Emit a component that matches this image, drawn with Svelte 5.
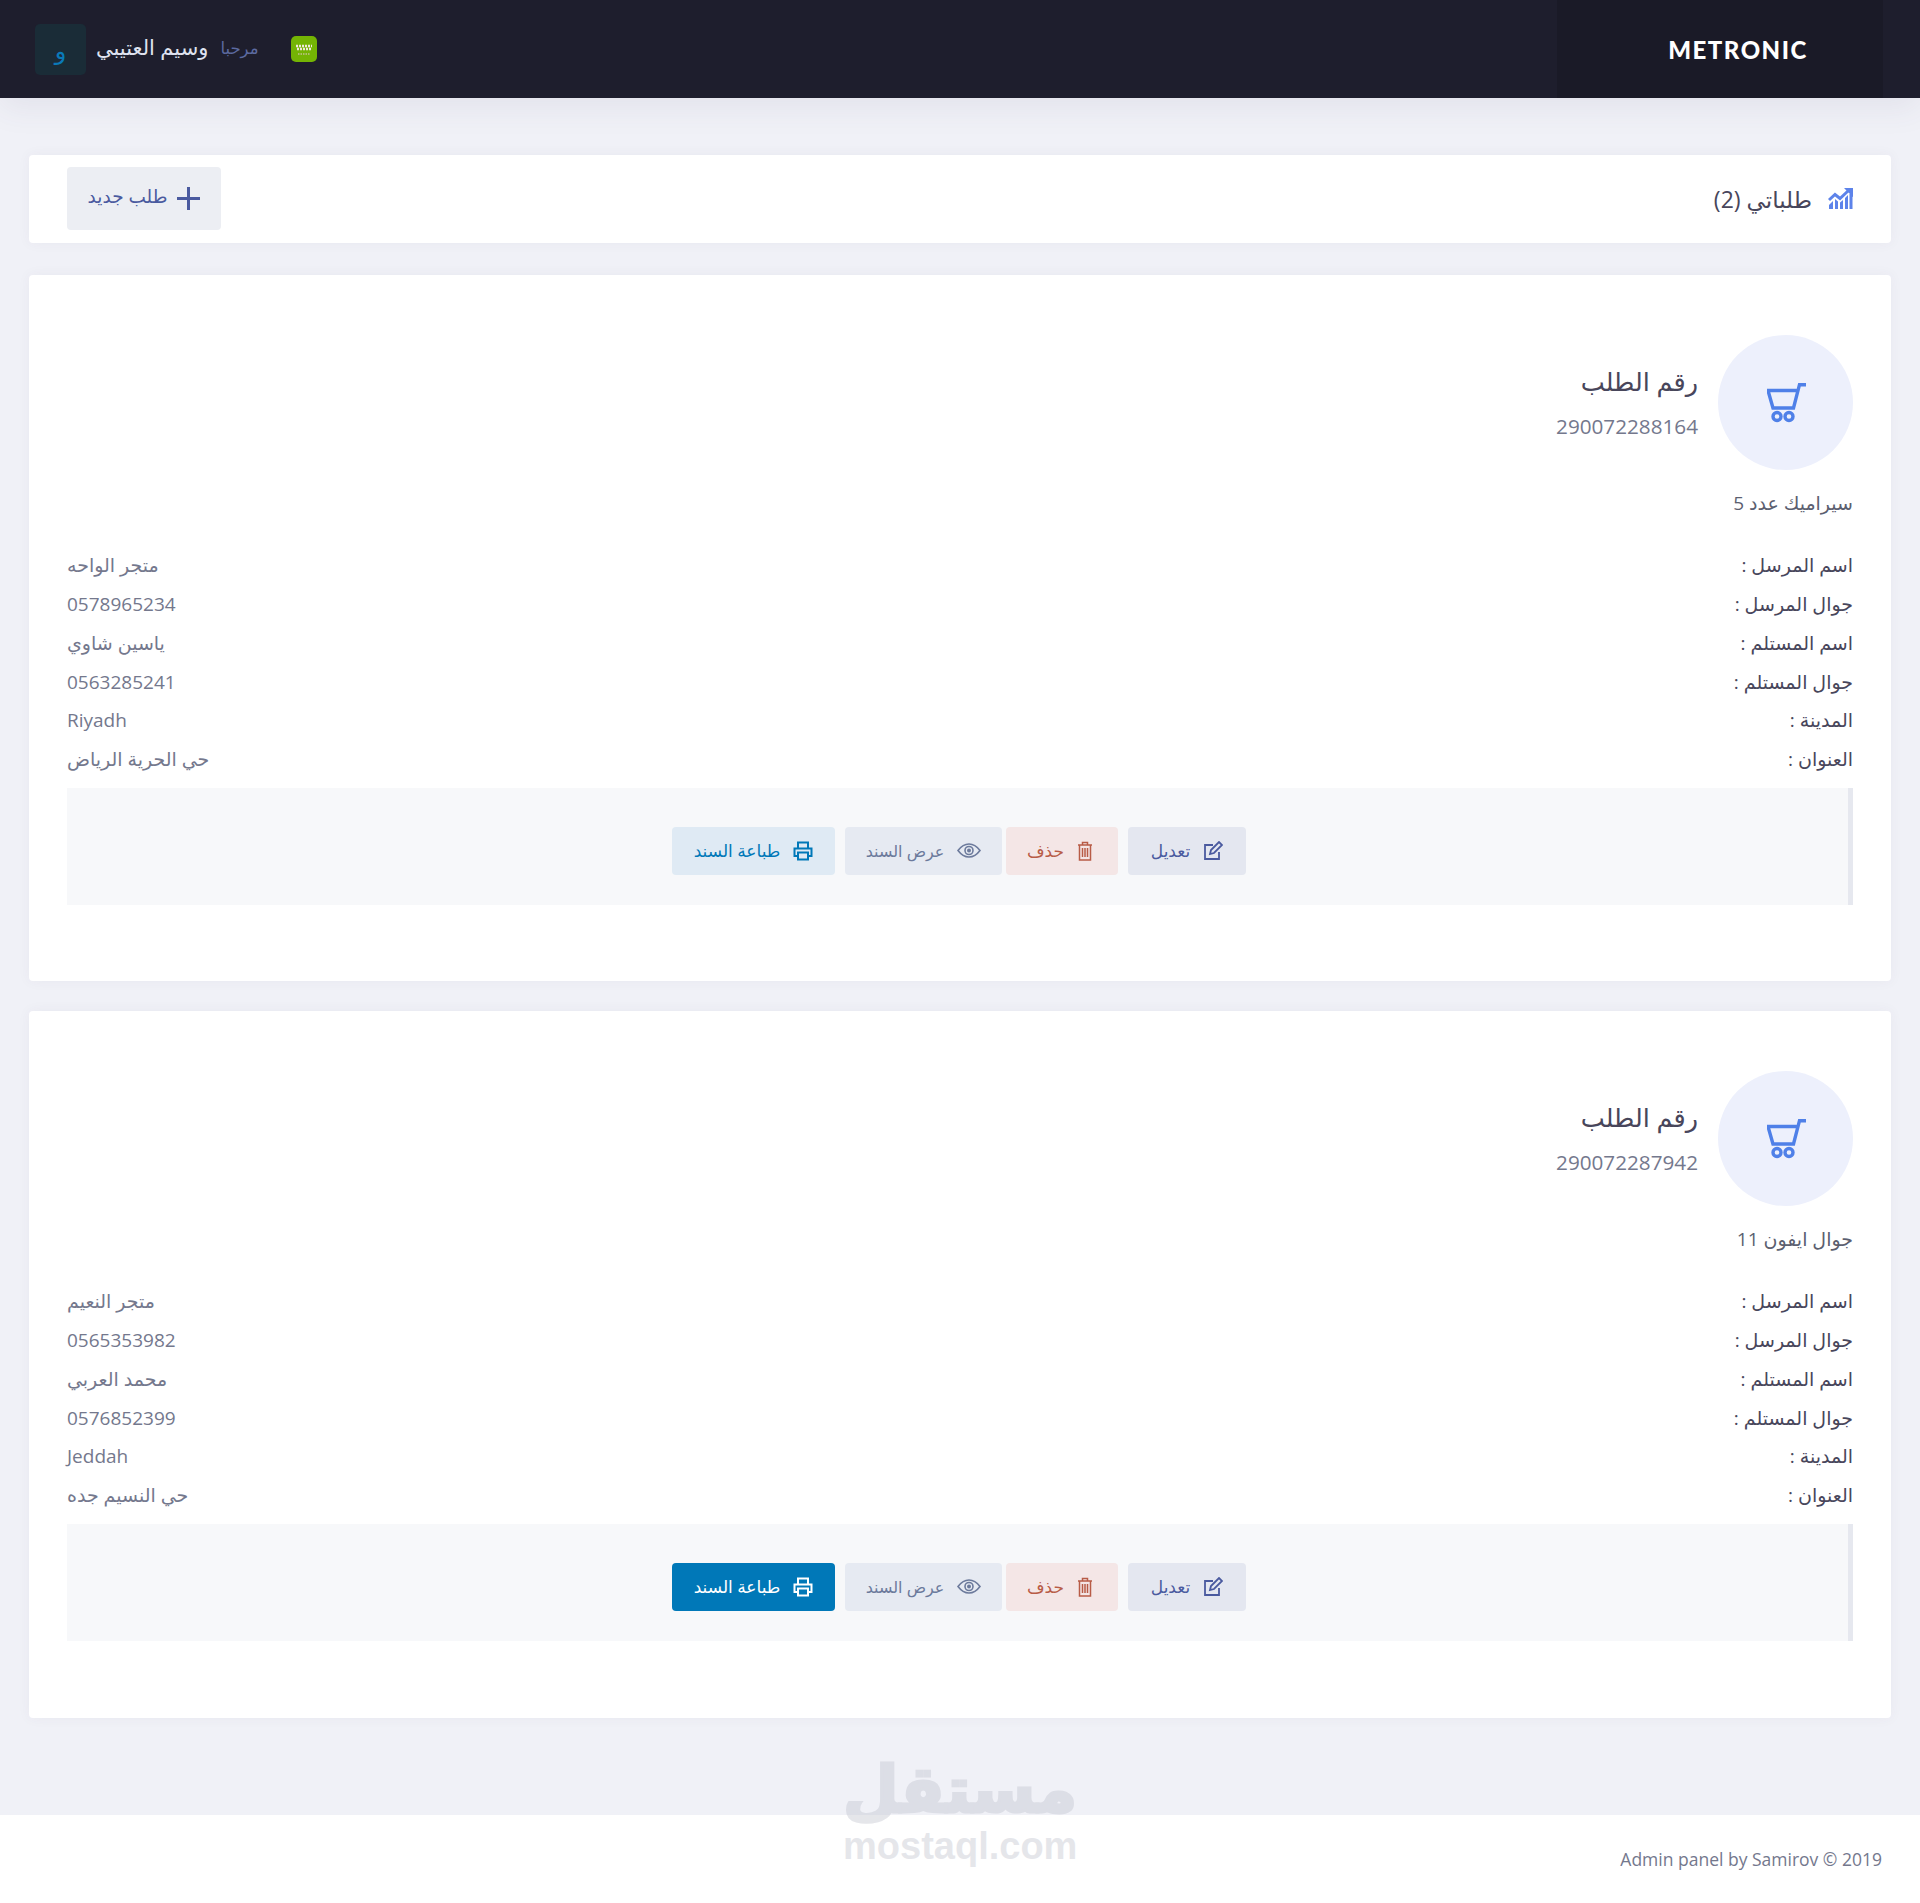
<script>
  const orders = [
    {
      id: '290072288164',
      item: 'سيراميك عدد 5',
      rows: ['متجر الواحه', '0578965234', 'ياسين شاوي', '0563285241', 'Riyadh', 'حي الحرية الرياض'],
      printActive: false
    },
    {
      id: '290072287942',
      item: 'جوال ايفون 11',
      rows: ['متجر النعيم', '0565353982', 'محمد العربي', '0576852399', 'Jeddah', 'حي النسيم جده'],
      printActive: true
    }
  ];
  const labels = ['اسم المرسل :', 'جوال المرسل :', 'اسم المستلم :', 'جوال المستلم :', 'المدينة :', 'العنوان :'];
</script>

<div class="page" dir="rtl">
  <header class="topbar">
    <div class="brand">METRONIC</div>
    <div class="user">
      <div class="flag">
        <svg viewBox="0 0 26 26" width="26" height="26" fill="none">
          <path d="M5 10h16M6 13h14" stroke="#efe6dc" stroke-width="2.500" stroke-dasharray="2 1"/>
          <path d="M7 18h12" stroke="#e8c8d8" stroke-width="1" stroke-dasharray="1.500 1"/>
        </svg>
      </div>
      <span class="hello">مرحبا</span>
      <span class="name">وسيم العتيبي</span>
      <div class="avatar">و</div>
    </div>
  </header>

  <main class="content">
    <section class="card head">
      <div class="head-title">
        <svg class="chart" viewBox="0 0 25 21" width="25" height="21">
          <path d="M1 12l6-5.500 5 4L20 3" fill="none" stroke="#5d83ea" stroke-width="3"/>
          <path fill="#5d83ea" d="M16 0h9v9zM1 21v-4l4-4v8zM7 21v-10l3 2.500v7.500zM12 21v-6.500l3-2.500v9zM17 21V10l3-3v14zM21.500 21V6l3-3v18z"/>
        </svg>
        <h3>طلباتي (2)</h3>
      </div>
      <button class="new-btn">
        <svg viewBox="0 0 23 23" width="23" height="23"><path d="M11.500 0v23M0 11.500h23" stroke="#4a5a9f" stroke-width="3" fill="none"/></svg>
        <span>طلب جديد</span>
      </button>
    </section>

    {#each orders as order}
      <section class="card order">
        <div class="order-top">
          <div class="circle">
            <svg viewBox="0 0 40 40" width="40" height="40" fill="none" stroke="#4f80e8" stroke-width="3.400">
              <path d="M39 1.700h-6.500L26.500 25H6L1 7.500h28.500"/>
              <circle cx="10" cy="33.500" r="4"/>
              <circle cx="22" cy="33.500" r="4"/>
            </svg>
          </div>
          <div class="order-id">
            <h4>رقم الطلب</h4>
            <p>{order.id}</p>
          </div>
        </div>
        <div class="item">{order.item}</div>
        <div class="rows">
          {#each labels as label, i}
            <div class="row">
              <span class="label">{label}</span>
              <span class="value">{order.rows[i]}</span>
            </div>
          {/each}
        </div>
        <div class="actions">
          <button class="btn edit">
            <svg viewBox="0 0 20 20" width="20" height="20" fill="none" stroke="currentColor" stroke-width="1.800">
              <path d="M10 4H2v14h14v-7"/>
              <path d="M7 13l1-4 8-8 3 3-8 8z"/>
            </svg>
            <span>تعديل</span>
          </button>
          <button class="btn del">
            <svg viewBox="0 0 16 20" width="16" height="20" fill="none" stroke="currentColor" stroke-width="1.500">
              <path d="M1 4h14M5.500 4V1.500h5V4M2.500 4v15h11V4M5.500 7v9M8 7v9M10.500 7v9"/>
            </svg>
            <span>حذف</span>
          </button>
          <button class="btn view">
            <svg viewBox="0 0 24 15" width="24" height="15" fill="none" stroke="currentColor" stroke-width="1.600">
              <path d="M1 7.500c3-4 7-6.500 11-6.500s8 2.500 11 6.500c-3 4-7 6.500-11 6.500S4 11.500 1 7.500z"/>
              <circle cx="12" cy="7.500" r="4"/>
              <circle cx="12" cy="7.500" r="2" fill="currentColor" stroke="none"/>
            </svg>
            <span>عرض السند</span>
          </button>
          <button class="btn print" class:active={order.printActive}>
            <svg viewBox="0 0 20 20" width="20" height="20" fill="none" stroke="currentColor" stroke-width="2">
              <path d="M5 7V1.500h10V7M5 15H1.500V7.500h17V15H15"/>
              <path d="M5 11.500h10v7H5z"/>
            </svg>
            <span>طباعة السند</span>
          </button>
        </div>
      </section>
    {/each}
  </main>

  <footer class="footer" dir="ltr">Admin panel by Samirov © 2019</footer>

  <div class="watermark" dir="ltr">
    <div class="wm-ar">مستقل</div>
    <div class="wm-en">mostaql.com</div>
  </div>
</div>

<style>
  :global(body) {
    margin: 0;
    background: #f0f1f7;
  }

  .page {
    position: relative;
    height: 1903px;
    font-family: "Open Sans", "DejaVu Sans", sans-serif;
    color: #48465b;
    overflow: hidden;
  }

  h3, h4, p {
    margin: 0;
    font-weight: 400;
  }

  button {
    font-family: inherit;
    border: none;
    cursor: pointer;
  }

  .topbar {
    height: 98px;
    background: #1e1e2d;
    display: flex;
    padding-right: 37px;
    padding-left: 35px;
    box-shadow: 0 10px 30px rgba(82, 63, 105, 0.08);
  }

  .brand {
    width: 326px;
    box-sizing: border-box;
    background: #1a1a27;
    color: #fff;
    font-family: "Lato", sans-serif;
    font-weight: 900;
    font-size: 24px;
    letter-spacing: 1.500px;
    display: flex;
    align-items: center;
    justify-content: center;
    padding-left: 36px;
  }

  .user {
    margin-right: auto;
    display: flex;
    align-items: center;
  }

  .flag {
    width: 26px;
    height: 26px;
    border-radius: 5px;
    background: #74b404;
    margin-left: 32px;
  }

  .flag svg {
    display: block;
  }

  .hello {
    font-size: 16.500px;
    color: #5c6aa0;
    margin-left: 12px;
    margin-bottom: 4px;
  }

  .name {
    font-size: 21px;
    color: #dfe3f0;
    margin-left: 10px;
    margin-bottom: 4px;
  }

  .avatar {
    width: 51px;
    height: 51px;
    border-radius: 5px;
    background: #1a2c37;
    color: #0a7ab8;
    font-size: 24px;
    display: flex;
    align-items: center;
    justify-content: center;
  }

  .content {
    padding: 57px 29px 0;
    display: flex;
    flex-direction: column;
    gap: 30px;
  }

  .card {
    background: #fff;
    border-radius: 4px;
    box-shadow: 0 0 13px rgba(82, 63, 105, 0.05);
  }

  .head {
    height: 88px;
    padding: 0 38px 1px;
    display: flex;
    align-items: center;
    justify-content: space-between;
    box-sizing: border-box;
    margin-bottom: 2px;
  }

  .head-title {
    display: flex;
    align-items: center;
    gap: 16px;
  }

  .head-title h3 {
    font-size: 23px;
  }

  .new-btn {
    height: 63px;
    width: 154px;
    border-radius: 4px;
    background: #eceef3;
    color: #4a5a9f;
    font-size: 18.500px;
    display: flex;
    align-items: center;
    justify-content: center;
    gap: 10px;
  }

  .new-btn span {
    margin-bottom: 6px;
  }

  .order {
    height: 706px;
    box-sizing: border-box;
    padding: 60px 38px 0;
  }

  .order:last-child {
    height: 707px;
  }

  .order-top {
    display: flex;
    gap: 20px;
  }

  .circle {
    width: 135px;
    height: 135px;
    border-radius: 50%;
    background: #edf0fc;
    display: flex;
    align-items: center;
    justify-content: center;
  }

  .circle svg {
    margin-right: -3px;
  }

  .order-id {
    padding-top: 26px;
  }

  .order-id h4 {
    font-size: 25.500px;
    line-height: 40px;
  }

  .order-id p {
    font-size: 20.700px;
    line-height: 34px;
    color: #74788d;
    margin-top: 8px;
  }

  .item {
    margin-top: 20px;
    font-size: 19px;
    line-height: 26px;
    color: #5c5f70;
  }

  .rows {
    margin-top: 30px;
  }

  .row {
    height: 38.750px;
    display: flex;
    align-items: center;
    justify-content: space-between;
    font-size: 19px;
  }

  .label {
    color: #48465b;
    font-weight: 500;
  }

  .value {
    color: #74788d;
  }

  .actions {
    margin-top: 9px;
    height: 117px;
    box-sizing: border-box;
    background: #f7f8fa;
    border-right: 5px solid #e6e8ef;
    padding: 39px 602px 0 0;
    display: flex;
    align-items: flex-start;
  }

  .btn {
    height: 48px;
    border-radius: 4px;
    display: flex;
    align-items: center;
    justify-content: center;
    gap: 13px;
    font-size: 17px;
  }

  .btn.edit {
    width: 118px;
    background: #e4e7f0;
    color: #4a5a9f;
    margin-left: 10px;
  }

  .btn.del {
    width: 112px;
    background: #f4e6e6;
    color: #b85c47;
    margin-left: 4px;
    padding: 0 4px 0 0;
  }

  .btn.view {
    width: 157px;
    background: #e6eaf2;
    color: #6c7a9c;
    margin-left: 10px;
    font-size: 16px;
  }

  .btn.print {
    width: 163px;
    background: #dfeaf4;
    color: #0078b8;
  }

  .btn.print.active {
    background: #0078b8;
    color: #fff;
  }

  .footer {
    position: absolute;
    left: 0;
    right: 0;
    bottom: 0;
    height: 88px;
    background: #fff;
    padding-right: 38px;
    display: flex;
    align-items: center;
    justify-content: flex-end;
    font-size: 17.500px;
    color: #74788d;
  }

  .watermark {
    position: absolute;
    left: 843px;
    top: 1748px;
    width: 232px;
    text-align: center;
    color: #c2c4cf;
    opacity: 0.42;
    pointer-events: none;
  }

  .wm-ar {
    font-family: "DejaVu Sans", sans-serif;
    font-weight: 700;
    font-size: 64px;
    line-height: 84px;
    -webkit-text-stroke: 3px #c2c4cf;
  }

  .wm-en {
    font-family: "Liberation Sans", sans-serif;
    font-weight: 700;
    font-size: 38px;
    line-height: 28px;
  }
</style>
